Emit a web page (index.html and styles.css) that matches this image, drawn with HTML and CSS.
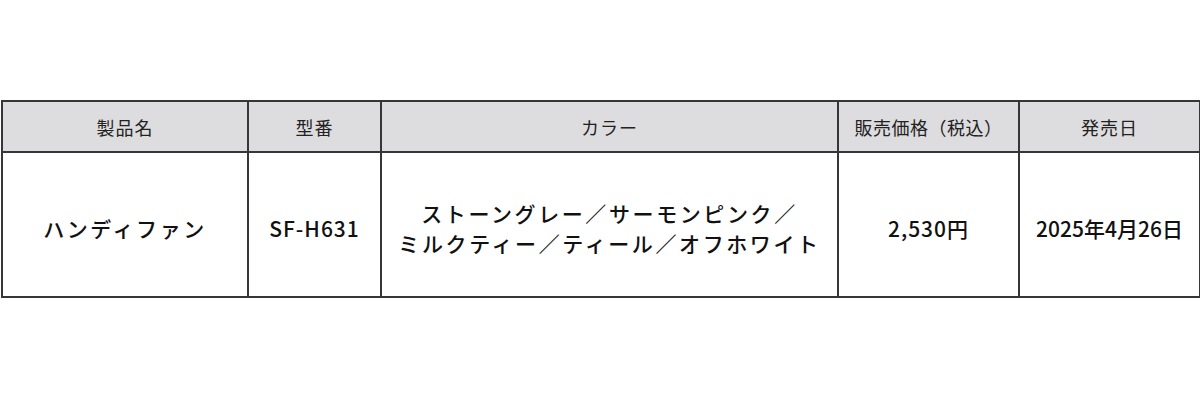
FILE: index.html
```html
<!DOCTYPE html>
<html lang="ja">
<head>
<meta charset="utf-8">
<link rel="stylesheet" href="styles.css">
</head>
<body>
<div class="page">
  <table class="spec">
    <colgroup>
      <col class="c1"><col class="c2"><col class="c3"><col class="c4"><col class="c5">
    </colgroup>
    <thead>
      <tr>
        <th>製品名</th>
        <th>型番</th>
        <th>カラー</th>
        <th class="tight">販売価格（税込）</th>
        <th>発売日</th>
      </tr>
    </thead>
    <tbody>
      <tr>
        <td class="kana">ハンディファン</td>
        <td class="latin">SF-H631</td>
        <td class="kana colors">ストーングレー／サーモンピンク／<br>ミルクティー／ティール／オフホワイト</td>
        <td class="latin">2,530円</td>
        <td class="date">2025年4月26日</td>
      </tr>
    </tbody>
  </table>
</div>
</body>
</html>
```

FILE: styles.css
```css
html, body {
  margin: 0;
  padding: 0;
  background: #ffffff;
}
.page {
  padding-top: 100px;
  padding-left: 0;
}
.spec {
  border-collapse: collapse;
  table-layout: fixed;
  width: 1198px;
  margin-left: 1px;
  font-family: "Noto Sans CJK JP", "Noto Sans", sans-serif;
}
.c1 { width: 246px; }
.c2 { width: 133px; }
.c3 { width: 457px; }
.c4 { width: 181px; }
.c5 { width: 181px; }
.spec th, .spec td {
  border: 2px solid #363636;
  text-align: center;
  vertical-align: middle;
  padding: 0;
}
.spec th {
  height: 49px;
  background: #dddcdf;
  font-size: 18px;
  font-weight: 400;
  color: #222;
  letter-spacing: 1px;
}
.spec th.tight {
  letter-spacing: 0.5px;
}
.spec td {
  height: 137px;
  font-size: 21px;
  font-weight: 500;
  color: #111;
  padding-top: 6px;
}
.spec td.kana {
  letter-spacing: 2.6px;
}
.spec td.colors {
  line-height: 30px;
}
.spec td.latin {
  letter-spacing: 1px;
}
.spec td.date {
  letter-spacing: 0;
}
```
